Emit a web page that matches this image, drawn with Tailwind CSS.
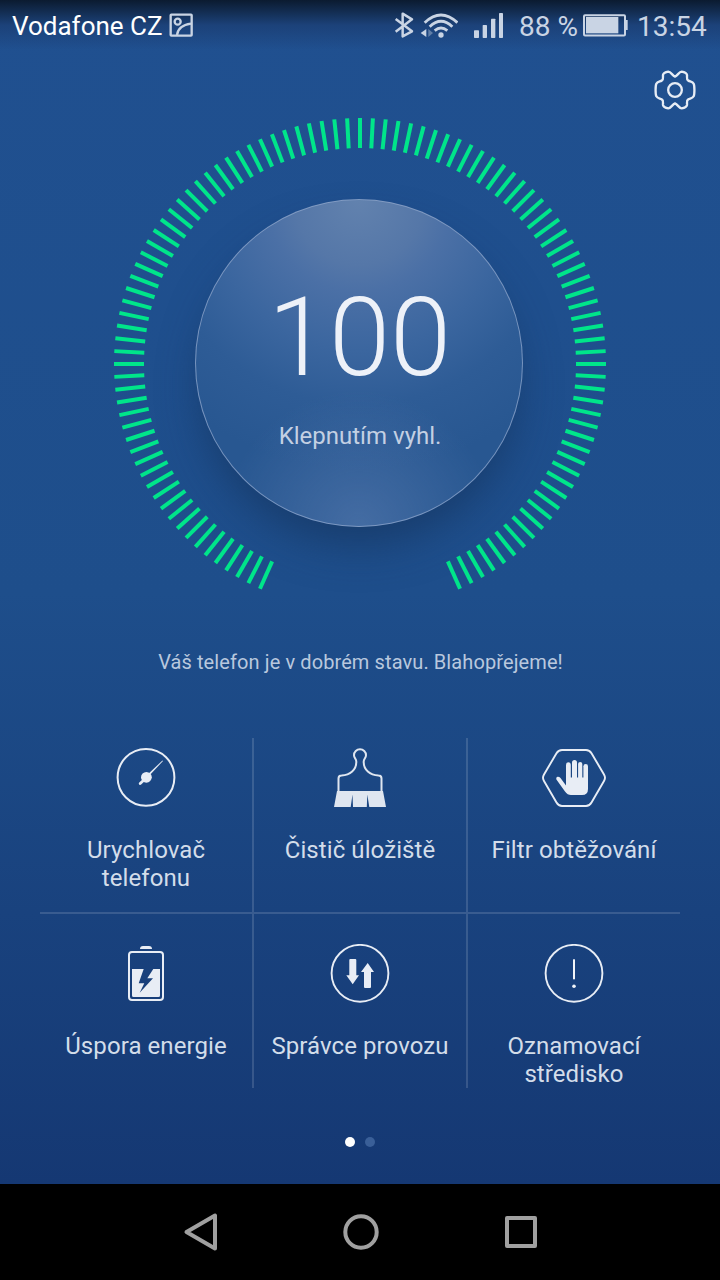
<!DOCTYPE html>
<html lang="cs">
<head>
    <meta charset="UTF-8">
    <meta name="viewport" content="width=device-width, initial-scale=1.0">
    <title>Správce telefonu</title>
    <script src="https://cdn.jsdelivr.net/npm/@tailwindcss/browser@4"></script>
</head>
<body class="bg-black font-['Roboto',sans-serif]">
    <div class="w-[720px] h-[1280px] flex flex-col overflow-hidden">
        <div class="h-[1184px] flex flex-col bg-linear-to-b from-[#205090] from-0% via-[#1e4e8b] via-50% to-[#153873] to-100%">

            <!-- Status bar -->
            <header class="h-[50px] shrink-0 flex items-center pl-3 bg-linear-to-b from-[#0b1b30] via-[#19386a]/60 via-50% to-transparent text-[#c9d4e4]">
                <span class="w-[157px] pt-[2px] text-[26px] leading-[50px] text-white whitespace-nowrap">Vodafone CZ</span>
                <svg class="w-6 h-6" viewBox="507 39 72 72" fill="none" stroke="currentColor" stroke-width="7">
                    <rect x="512" y="44" width="63" height="63" rx="2"/>
                    <circle cx="533" cy="65" r="9"/>
                    <path d="M531 105C533 88 544 75 573 71"/>
                </svg>
                <svg class="w-5 h-[30px] ml-[201px]" viewBox="42 30 60 90" fill="none" stroke="currentColor" stroke-width="7.5" stroke-linejoin="round">
                    <path d="M47 57L96 94L68 109V41L96 58L47 95"/>
                </svg>
                <svg class="w-[38px] h-[30px] ml-[6px]" viewBox="120 30 114 90" fill="none" stroke="currentColor" stroke-width="8.5">
                    <path d="M134 68Q183 22 232 68"/>
                    <path d="M149 80Q183 48 217 80"/>
                    <path d="M164 92Q183 76 202 92"/>
                    <circle cx="183" cy="105" r="8" fill="currentColor" stroke="none"/>
                    <path d="M122 99L139 87V111Z" fill="currentColor" stroke="none"/>
                    <path d="M145 87L159 99L145 111Z" fill="currentColor" fill-opacity=".4" stroke="none"/>
                </svg>
                <svg class="w-[30px] h-[30px] ml-4" viewBox="282 30 90 90" fill="currentColor">
                    <rect x="282" y="91" width="15" height="23" rx="2"/>
                    <rect x="308" y="75" width="13" height="39" rx="2"/>
                    <rect x="333" y="56" width="13" height="58" rx="2"/>
                    <rect x="357" y="39" width="12" height="75" rx="2"/>
                </svg>
                <span class="w-[65px] ml-[15px] pt-[3px] text-[28px] leading-[50px] whitespace-nowrap">88 %</span>
                <svg class="w-[45px] h-[30px] -ml-px" viewBox="609 30 135 90" fill="currentColor">
                    <rect x="612" y="45.5" width="123" height="61" rx="3" fill="none" stroke="currentColor" stroke-width="6"/>
                    <rect x="618" y="51" width="97" height="49"/>
                    <rect x="737" y="60" width="6" height="30"/>
                </svg>
                <span class="ml-[9px] pt-[3px] text-[28px] leading-[50px] whitespace-nowrap">13:54</span>
            </header>

            <!-- Settings -->
            <div class="h-[68px] shrink-0 flex justify-end items-start pr-[23.5px] pt-[17.7px]">
                <svg class="w-11 h-11" viewBox="-66 -66 132 132" fill="none" stroke="#e6ecf5" stroke-width="7" stroke-linejoin="round">
                    <path d="M0-40C8-43 12-55 20-55C26-54 35-50 36-45C37-39 33-32 40-28C46-25 53-25 56-19C59-13 59 13 56 19C53 25 46 25 40 28C33 32 37 39 36 45C35 50 26 54 20 55C12 55 8 43 0 40C-8 43-12 55-20 55C-26 54-35 50-36 45C-37 39-33 32-40 28C-46 25-53 25-56 19C-59 13-59-13-56-19C-53-25-46-25-40-28C-33-32-37-39-36-45C-35-50-26-54-20-55C-12-55-8-43 0-40Z"/>
                    <circle r="20.5"/>
                </svg>
            </div>

            <!-- Score gauge -->
            <div class="h-[492px] shrink-0 grid place-items-center">
                <svg class="[grid-area:1/1] w-[492px] h-[492px]" viewBox="-246 -246 492 492" stroke="#00e58a" stroke-width="4">
                    <g id="ticks"></g>
                </svg>
                <div class="[grid-area:1/1] w-[328px] h-[328px] mr-[2px] mb-[2px] rounded-full border border-[#8ba3c8]/80 flex flex-col items-center bg-[radial-gradient(circle_at_50%_100%,rgba(110,140,190,0.4)_0px,rgba(110,140,190,0.25)_50px,rgba(110,140,190,0)_135px),radial-gradient(circle_at_50%_0%,#6282ae_0px,#5577a8_65px,#4b70a6_92px,#3b669f_150px,#2e5c96_205px,#285791_270px)] shadow-[0_24px_40px_-6px_rgba(20,50,90,0.6)]">
                    <div class="mt-[73px] ml-px h-[130px] text-[110px] leading-[130px] font-light text-[#edf1f8]">100</div>
                    <div class="mt-[19px] ml-[2px] text-2xl leading-7 text-[#c3d0e3]">Klepnutím vyhl.</div>
                </div>
            </div>

            <p class="mt-[38px] ml-px text-xl leading-7 tracking-[0.1px] text-center text-[#b9c8de]">Váš telefon je v dobrém stavu. Blahopřejeme!</p>

            <!-- Tools -->
            <div class="mt-[62px] mx-10 shrink-0 grid grid-cols-[214px_214px_212px] grid-rows-[176px_174px] text-2xl leading-7 tracking-[0.08px] text-center text-[#d3ddea]">
                <div class="flex flex-col items-center gap-7 pt-[10px] border-r-2 border-b-2 border-white/14">
                    <svg class="w-[60px] h-[60px] shrink-0" viewBox="0 0 60 60" fill="#e8edf5">
                        <circle cx="30" cy="29.4" r="28.4" fill="none" stroke="#e8edf5" stroke-width="2"/>
                        <circle cx="30.4" cy="29.3" r="5.4"/>
                        <path d="M31.500 29.500L47 13L46.500 12.500L30 28Z"/>
                        <path d="M30 30L24.200 35.500" stroke="#e8edf5" stroke-width="2.800" stroke-linecap="round"/>
                    </svg>
                    <div>Urychlovač<br>telefonu</div>
                </div>
                <div class="flex flex-col items-center gap-7 pt-[10px] border-r-2 border-b-2 border-white/14">
                    <svg class="w-[60px] h-[60px] shrink-0" viewBox="0 0 60 60">
                        <path d="M8.500 43.500V30.500Q8.500 27.600 11.500 27.500C20 27 26.500 22 26.300 13.500C26.200 11 24 10 24 7.200A6 6 0 0 1 36 7.200C36 10 33.800 11 33.700 13.500C33.500 22 40 27 48.500 27.500Q51.500 27.600 51.500 30.500V43.500" fill="none" stroke="#dfe6f0" stroke-width="2"/>
                        <path d="M7 43H53L56 59H39.300L37.300 46.500L36.800 59H23L22.500 46.500L20.700 59H4Z" fill="#dfe6f0"/>
                    </svg>
                    <div>Čistič úložiště</div>
                </div>
                <div class="flex flex-col items-center gap-7 pt-[10px] border-b-2 border-white/14">
                    <svg class="w-[66px] h-[60px] shrink-0" viewBox="-3 0 66 60" fill="#e8edf5">
                        <path d="M18 2H42Q45.500 2 47.500 5.200L60 26.500Q62 29.800 60 33L47.500 54.500Q45.500 58 42 58H18Q14.500 58 12.500 54.500L0 33Q-2 29.800 0 26.500L12.500 5.200Q14.500 2 18 2Z" fill="none" stroke="#e8edf5" stroke-width="1.900"/>
                        <rect x="22" y="14.300" width="4.800" height="22" rx="2.400"/>
                        <rect x="28" y="12" width="5" height="22" rx="2.500"/>
                        <rect x="34.100" y="14" width="4.200" height="22" rx="2.100"/>
                        <rect x="39.400" y="16" width="4.600" height="22" rx="2.300"/>
                        <path d="M22 29.500H44V41Q44 47 38 47H27Q23.500 47 21 43.500L12.400 31.500Q11.500 29.500 13.500 28.700Q15.200 28.500 16.500 30L22 37.500Z"/>
                    </svg>
                    <div>Filtr obtěžování</div>
                </div>
                <div class="flex flex-col items-center gap-7 pt-[30px] border-r-2 border-white/14">
                    <svg class="w-[60px] h-[60px] shrink-0" viewBox="0 0 60 60" fill="#e8edf5">
                        <path d="M24 5Q24 2 27 2H33Q36 2 36 5Z"/>
                        <rect x="13" y="8" width="34" height="48" rx="3" fill="none" stroke="#e8edf5" stroke-width="2"/>
                        <path d="M16 25H27.700L22.700 39.300H28.300L23.700 48.700L37 34.300H31.300L37.300 25H44V51.500Q44 53 42.500 53H17.500Q16 53 16 51.500Z"/>
                    </svg>
                    <div>Úspora energie</div>
                </div>
                <div class="flex flex-col items-center gap-7 pt-[30px] border-r-2 border-white/14">
                    <svg class="w-[60px] h-[60px] shrink-0" viewBox="0 0 60 60" fill="#e8edf5">
                        <circle cx="30" cy="29.300" r="28.400" fill="none" stroke="#e8edf5" stroke-width="1.900"/>
                        <path d="M20.300 15H25.300Q26.300 15 26.300 16V31.300H29L22.700 40.300L16.300 31.300H19.300V16Q19.300 15 20.300 15Z"/>
                        <path d="M37.700 19L44 27.900H41V43Q41 44 40 44H35Q34 44 34 43V27.900H31Z"/>
                    </svg>
                    <div class="whitespace-nowrap">Správce provozu</div>
                </div>
                <div class="flex flex-col items-center gap-7 pt-[30px]">
                    <svg class="w-[60px] h-[60px] shrink-0" viewBox="0 0 60 60" fill="#f1f4f9">
                        <circle cx="30" cy="29.300" r="28.400" fill="none" stroke="#e8edf5" stroke-width="1.900"/>
                        <rect x="29" y="15.300" width="2" height="20"/>
                        <circle cx="30" cy="42.300" r="1.800"/>
                    </svg>
                    <div>Oznamovací<br>středisko</div>
                </div>
            </div>

            <!-- Page dots -->
            <div class="mt-[48.500px] flex justify-center gap-[10px]">
                <span class="w-[10px] h-[10px] rounded-full bg-white"></span>
                <span class="w-[10px] h-[10px] rounded-full bg-[#3a5f98]"></span>
            </div>
        </div>

        <!-- Navigation bar -->
        <nav class="h-24 shrink-0 flex items-center justify-center gap-[120px] pl-[2px] bg-black">
            <svg class="w-10 h-10" viewBox="181 1212 40 40" fill="none" stroke="#a0a0a0" stroke-width="4" stroke-linejoin="round">
                <path d="M186.500 1232L215 1215.500V1248.500Z"/>
            </svg>
            <svg class="w-10 h-10" viewBox="341 1212 40 40" fill="none" stroke="#a0a0a0" stroke-width="4">
                <circle cx="361" cy="1232" r="15.700"/>
            </svg>
            <svg class="w-10 h-10" viewBox="501 1212 40 40" fill="none" stroke="#a0a0a0" stroke-width="4" stroke-linejoin="round">
                <rect x="507" y="1218" width="28" height="28"/>
            </svg>
        </nav>
    </div>

    <script>
        // one tick every 3 degrees, open at the bottom
        const ticks = document.getElementById('ticks');
        for (let a = -156; a <= 156; a += 3) {
            const line = document.createElementNS('http://www.w3.org/2000/svg', 'line');
            line.setAttribute('y1', -246);
            line.setAttribute('y2', -216);
            line.setAttribute('transform', `rotate(${a})`);
            ticks.appendChild(line);
        }
    </script>
</body>
</html>
